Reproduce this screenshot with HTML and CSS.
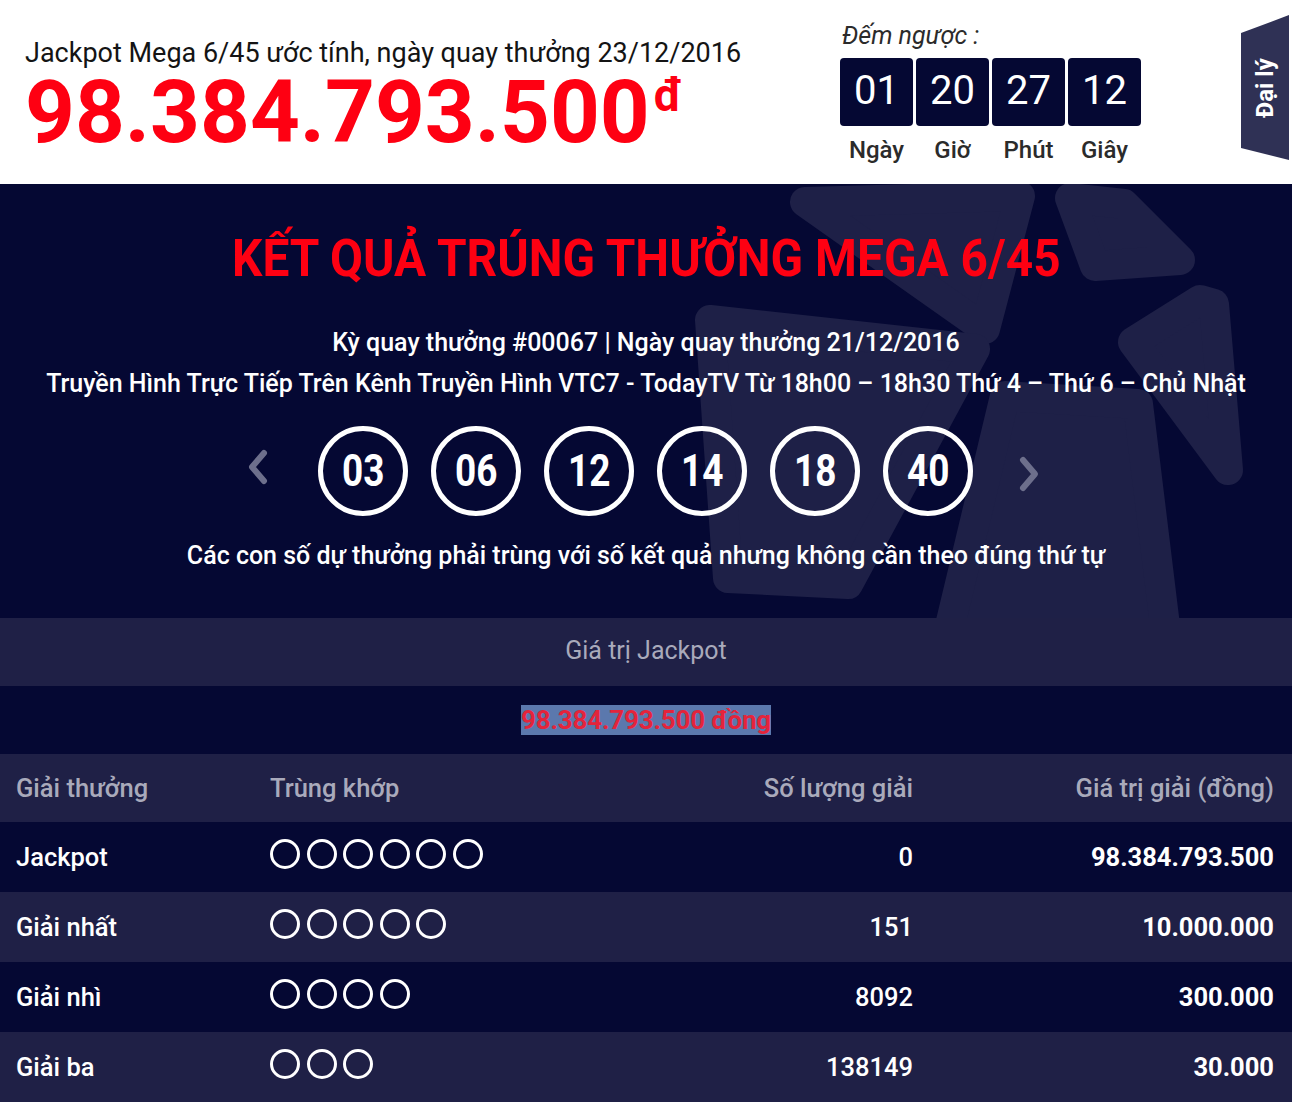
FILE: index.html
```html
<!DOCTYPE html>
<html lang="vi">
<head>
<meta charset="utf-8">
<title>Kết quả Mega 6/45</title>
<link rel="stylesheet" href="styles.css">
</head>
<body>
<header class="top">
  <div class="jp">
    <div class="jp-label">Jackpot Mega 6/45 ước tính, ngày quay thưởng 23/12/2016</div>
    <div class="jp-amount">98.384.793.500<span class="jp-cur">đ</span></div>
  </div>
  <div class="countdown">
    <div class="cd-title">Đếm ngược :</div>
    <div class="cd-boxes">
      <div class="cd-unit"><div class="cd-num">01</div><div class="cd-lbl">Ngày</div></div>
      <div class="cd-unit"><div class="cd-num">20</div><div class="cd-lbl">Giờ</div></div>
      <div class="cd-unit"><div class="cd-num">27</div><div class="cd-lbl">Phút</div></div>
      <div class="cd-unit"><div class="cd-num">12</div><div class="cd-lbl">Giây</div></div>
    </div>
  </div>
  <a class="agent-tab" href="#"><span>Đại lý</span></a>
</header>

<section class="result">
  <svg class="decor" width="1292" height="434" viewBox="0 0 1292 434" aria-hidden="true">
    <g fill="#1e2047" stroke="#1e2047" stroke-width="30" stroke-linejoin="round">
      <polygon points="805,18 1020,12 985,145"/>
      <polygon points="1070,14 1124,20 1180,76 1095,82"/>
      <polygon points="1133,158 1200,116 1214,120 1228,286"/>
      <polygon points="710,136 975,165 848,400 728,394"/>
      <polygon points="1005,212 1138,220 1166,450 948,450"/>
    </g>
  </svg>
  <div class="result-inner">
    <h1 class="result-title"><span>KẾT QUẢ TRÚNG THƯỞNG MEGA 6/45</span></h1>
    <p class="draw-info">Kỳ quay thưởng #00067 | Ngày quay thưởng 21/12/2016</p>
    <p class="draw-info">Truyền Hình Trực Tiếp Trên Kênh Truyền Hình VTC7 - TodayTV Từ 18h00 – 18h30 Thứ 4 – Thứ 6 – Chủ Nhật</p>
    <div class="balls">
      <a class="arrow arrow-prev" href="#"><svg width="26" height="38" viewBox="0 0 26 38"><path d="M19 5 L7 19 L19 33" fill="none" stroke="#6d6f8c" stroke-width="6" stroke-linecap="round" stroke-linejoin="round"/></svg></a>
      <div class="ball"><span>03</span></div>
      <div class="ball"><span>06</span></div>
      <div class="ball"><span>12</span></div>
      <div class="ball"><span>14</span></div>
      <div class="ball"><span>18</span></div>
      <div class="ball"><span>40</span></div>
      <a class="arrow arrow-next" href="#"><svg width="26" height="38" viewBox="0 0 26 38"><path d="M7 5 L19 19 L7 33" fill="none" stroke="#6d6f8c" stroke-width="6" stroke-linecap="round" stroke-linejoin="round"/></svg></a>
    </div>
    <p class="note">Các con số dự thưởng phải trùng với số kết quả nhưng không cần theo đúng thứ tự</p>
  </div>
</section>

<div class="jackpot-head">Giá trị Jackpot</div>
<div class="jackpot-value"><span>98.384.793.500 đồng</span></div>

<div class="prize-table">
  <div class="prow phead">
    <div>Giải thưởng</div>
    <div>Trùng khớp</div>
    <div class="num">Số lượng giải</div>
    <div class="num">Giá trị giải (đồng)</div>
  </div>
  <div class="prow dark">
    <div>Jackpot</div>
    <div class="dots"><i></i><i></i><i></i><i></i><i></i><i></i></div>
    <div class="num">0</div>
    <div class="num val">98.384.793.500</div>
  </div>
  <div class="prow light">
    <div>Giải nhất</div>
    <div class="dots"><i></i><i></i><i></i><i></i><i></i></div>
    <div class="num">151</div>
    <div class="num val">10.000.000</div>
  </div>
  <div class="prow dark">
    <div>Giải nhì</div>
    <div class="dots"><i></i><i></i><i></i><i></i></div>
    <div class="num">8092</div>
    <div class="num val">300.000</div>
  </div>
  <div class="prow light">
    <div>Giải ba</div>
    <div class="dots"><i></i><i></i><i></i></div>
    <div class="num">138149</div>
    <div class="num val">30.000</div>
  </div>
</div>
</body>
</html>
```

FILE: styles.css
```css
* { box-sizing: border-box; }

body {
  margin: 0;
  width: 1292px;
  background: #ffffff;
  font-family: Roboto, "Noto Sans", "DejaVu Sans", sans-serif;
  overflow: hidden;
}

/* ---------- header ---------- */
.top {
  position: relative;
  height: 184px;
  display: grid;
  grid-template-columns: 815px auto;
  padding: 22px 0 0 25px;
}

.jp { padding-top: 16px; }

.jp-label {
  font-size: 27px;
  line-height: 30px;
  color: #141414;
  white-space: nowrap;
}

.jp-amount {
  margin-top: 4px;
  font-size: 87px;
  line-height: 80px;
  font-weight: 700;
  color: #fe0012;
  white-space: nowrap;
}

.jp-cur {
  font-size: 46px;
  line-height: 46px;
  vertical-align: top;
  margin-left: 4px;
}

.cd-title {
  font-size: 25px;
  line-height: 28px;
  font-style: italic;
  color: #2b2b2b;
  padding-left: 2px;
}

.cd-boxes {
  display: flex;
  gap: 3px;
  margin-top: 8px;
}

.cd-unit {
  width: 73px;
  display: flex;
  flex-direction: column;
  align-items: center;
}

.cd-num {
  width: 73px;
  height: 68px;
  border-radius: 4px;
  background: #050833;
  color: #ffffff;
  font-size: 40px;
  line-height: 66px;
  text-align: center;
}

.cd-lbl {
  margin-top: 10px;
  font-size: 24px;
  line-height: 28px;
  font-weight: 500;
  color: #2b2b2b;
}

.agent-tab {
  position: absolute;
  top: 15px;
  right: 3px;
  width: 48px;
  height: 145px;
  background: #2f3155;
  clip-path: polygon(0 18px, 100% 0, 100% 100%, 0 calc(100% - 12px));
  display: flex;
  align-items: center;
  justify-content: center;
  text-decoration: none;
}

.agent-tab span {
  transform: rotate(-90deg);
  white-space: nowrap;
  color: #ffffff;
  font-size: 24px;
  font-weight: 700;
}

/* ---------- result block ---------- */
.result {
  position: relative;
  height: 434px;
  background: #050833;
  overflow: hidden;
}

.decor {
  position: absolute;
  left: 0;
  top: 0;
}

.result-inner {
  position: relative;
  padding-top: 45px;
  text-align: center;
  color: #ffffff;
}

.result-title {
  margin: 0;
  font-size: 52px;
  line-height: 60px;
  font-weight: 700;
  color: #fe0012;
  white-space: nowrap;
}

.result-title span {
  display: inline-block;
  transform: scaleX(0.92);
}

.draw-info {
  margin: 0;
  font-size: 25px;
  line-height: 41px;
  font-weight: 500;
  white-space: nowrap;
}

.result-title + .draw-info { margin-top: 33px; }

.balls {
  margin-top: 22px;
  display: flex;
  justify-content: center;
  align-items: center;
  gap: 23px;
}

.ball {
  width: 90px;
  height: 90px;
  border: 5px solid #ffffff;
  border-radius: 50%;
  display: flex;
  align-items: center;
  justify-content: center;
}

.ball span {
  display: inline-block;
  font-size: 44px;
  font-weight: 700;
  line-height: 1;
  transform: scaleX(0.84);
}

.arrow { display: flex; }
.arrow-prev { margin-right: 23px; transform: translate(-1px, -4px); }
.arrow-next { margin-left: 24px; transform: translate(-4px, 3px); }

.note {
  margin: 25px 0 0;
  font-size: 25px;
  line-height: 30px;
  font-weight: 500;
  white-space: nowrap;
}

/* ---------- jackpot value ---------- */
.jackpot-head {
  height: 68px;
  background: #1f2046;
  color: #a9aabb;
  font-size: 25px;
  line-height: 66px;
  text-align: center;
}

.jackpot-value {
  height: 68px;
  background: #050833;
  display: flex;
  align-items: center;
  justify-content: center;
}

.jackpot-value span {
  background: #5b78ad;
  color: #e4243b;
  font-size: 26px;
  font-weight: 700;
  line-height: 30px;
  letter-spacing: -0.2px;
}

/* ---------- prize table ---------- */
.prow {
  display: grid;
  grid-template-columns: 254px 393px 250px 361px;
  align-items: center;
  height: 70px;
  padding: 0 18px 0 16px;
  font-size: 25.5px;
  color: #ffffff;
  font-weight: 500;
}

.prow.phead {
  height: 68px;
  background: #1f2046;
  color: #a9aabb;
  font-weight: 500;
}

.prow.dark { background: #050833; }
.prow.light { background: #1f2046; }

.prow .num { text-align: right; }
.prow .val { font-weight: 700; }

.dots {
  display: flex;
  gap: 6.5px;
  margin-top: -6px;
}

.dots i {
  width: 30px;
  height: 30px;
  border: 3px solid #ffffff;
  border-radius: 50%;
}
```
